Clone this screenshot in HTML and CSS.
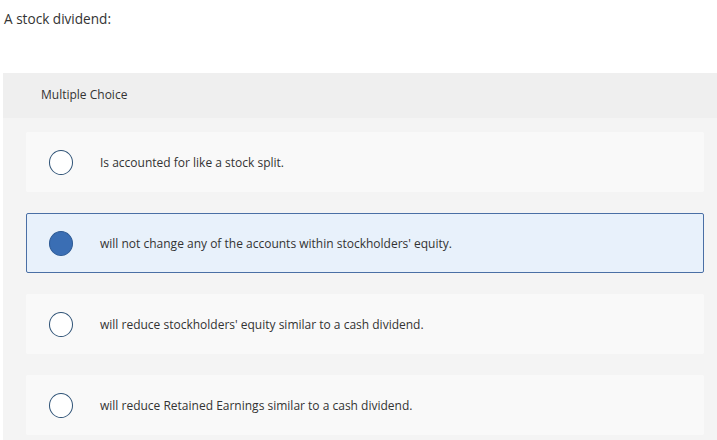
FILE: index.html
```html
<!DOCTYPE html>
<html>
<head>
<meta charset="utf-8">
<link rel="stylesheet" href="styles.css">
</head>
<body>
<div class="question">A stock dividend:</div>
<div class="panel">
  <div class="panel-head">Multiple Choice</div>
  <div class="panel-body">
    <div class="option"><span class="radio"></span><span class="label">Is accounted for like a stock split.</span></div>
    <div class="option selected"><span class="radio"></span><span class="label">will not change any of the accounts within stockholders' equity.</span></div>
    <div class="option"><span class="radio"></span><span class="label">will reduce stockholders' equity similar to a cash dividend.</span></div>
    <div class="option"><span class="radio"></span><span class="label">will reduce Retained Earnings similar to a cash dividend.</span></div>
  </div>
</div>
</body>
</html>
```
FILE: styles.css
```css
html, body {
  margin: 0;
  padding: 0;
  background: #ffffff;
  font-family: "Open Sans", Lato, sans-serif;
  color: #333333;
  overflow: hidden;
}
.question {
  padding: 10px 0 0 4px;
  height: 73px;
  box-sizing: border-box;
  font-size: 13.6px;
  line-height: 18px;
  color: #333;
}
.panel {
  margin-left: 3px;
  background: #f4f4f4;
}
.panel-head {
  background: #efefef;
  height: 45px;
  box-sizing: border-box;
  padding: 14px 0 0 38px;
  font-size: 12px;
  line-height: 16px;
  color: #333;
}
.panel-body {
  padding: 14px 13px 10px 23px;
  display: flex;
  flex-direction: column;
  gap: 21px;
}
.option {
  height: 60px;
  box-sizing: border-box;
  background: #f9f9f9;
  border: 1px solid transparent;
  border-radius: 2px;
  display: flex;
  align-items: center;
  padding-left: 22px;
}
.option.selected {
  background: #e8f1fb;
  border-color: #4a6fa5;
}
.radio {
  width: 22px;
  height: 23px;
  border: 1.5px solid #2e5276;
  border-radius: 50%;
  background: #fff;
  flex: none;
}
.option.selected .radio {
  background: #3a6eb4;
  border-color: #2d5a94;
}
.label {
  margin-left: 27px;
  font-size: 12px;
  color: #333;
}
```
